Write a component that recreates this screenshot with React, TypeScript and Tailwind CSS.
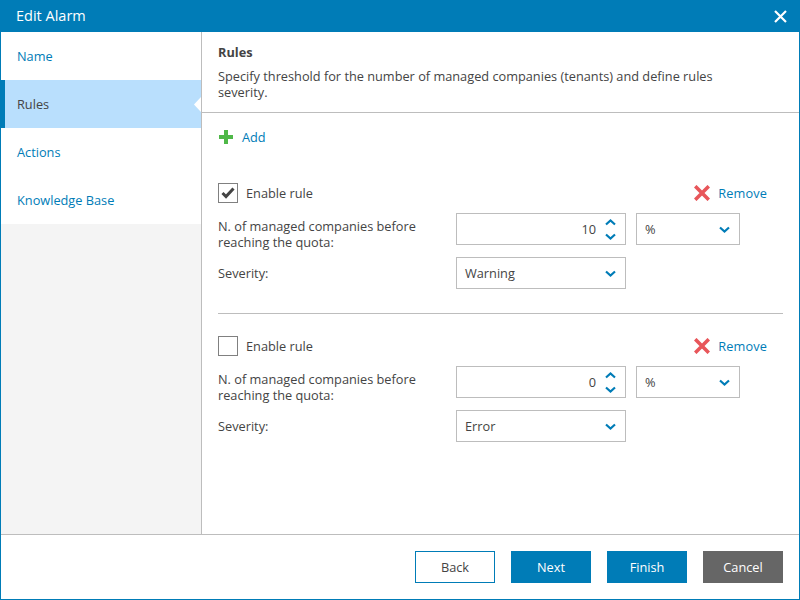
const NAV = ['Name', 'Rules', 'Actions', 'Knowledge Base']

function Chevron({ up = false }: { up?: boolean }) {
  return (
    <svg width="11" height="7" viewBox="0 0 11 7" className="block">
      <path d={up ? 'M1 5.5 L5.5 1.5 L10 5.5' : 'M1 1.5 L5.5 5.5 L10 1.5'} fill="none" stroke="#007cb7" strokeWidth="2.2" />
    </svg>
  )
}

function Select({ value, width }: { value: string; width: string }) {
  return (
    <div className={`${width} h-8 border border-[#bdbdbd] flex items-center justify-between pl-2 pr-[9px] text-[#444]`}>
      <span>{value}</span>
      <Chevron />
    </div>
  )
}

function Rule({ enabled, count, severity }: { enabled: boolean; count: string; severity: string }) {
  return (
    <div>
      <div className="flex items-center justify-between h-5 pr-[16px]">
        <div className="flex items-center gap-2">
          <div className="w-5 h-5 border border-[#808080] flex items-center justify-center">
            {enabled && (
              <svg width="14" height="12" viewBox="0 0 14 12">
                <path d="M1.5 6 L5 9.5 L12.5 1.5" fill="none" stroke="#444" strokeWidth="3" />
              </svg>
            )}
          </div>
          <span className="text-[#444]">Enable rule</span>
        </div>
        <div className="flex items-center gap-2">
          <svg width="16" height="16" viewBox="0 0 16 16" className="-ml-px">
            <path d="M1.2 1.2 L14.8 14.8 M14.8 1.2 L1.2 14.8" stroke="#e8565a" strokeWidth="3.6" />
          </svg>
          <span className="text-[#007cb7] tracking-[0.1px]">Remove</span>
        </div>
      </div>
      <div className="flex mt-[10px] h-8">
        <div className="w-[238px] shrink-0 pt-[5px]">
          <div className="w-[215px] leading-4 text-[#444]">N. of managed companies before reaching the quota:</div>
        </div>
        <div className="w-[170px] h-8 border border-[#bdbdbd] flex items-center justify-end pr-[9px] gap-[9px] text-[#444]">
          <span>{count}</span>
          <div className="flex flex-col gap-[7px]">
            <Chevron up />
            <Chevron />
          </div>
        </div>
        <div className="ml-[10px]">
          <Select value="%" width="w-[104px]" />
        </div>
      </div>
      <div className="flex items-center mt-3 h-8">
        <div className="w-[238px] text-[#444]">Severity:</div>
        <Select value={severity} width="w-[170px]" />
      </div>
    </div>
  )
}

export default function App() {
  return (
    <div className="w-[800px] h-[600px] flex flex-col bg-white text-[12.75px] leading-4 border border-t-0 border-[#007cb7] font-['Open_Sans','Noto_Sans',sans-serif]">
      <div className="h-8 -mx-px bg-[#007cb7] flex items-center justify-between pl-4 pr-[13px] text-white shrink-0">
        <span className="text-[14.5px]">Edit Alarm</span>
        <svg width="13" height="13" viewBox="0 0 13 13">
          <path d="M1 1 L12 12 M12 1 L1 12" stroke="#fff" strokeWidth="2.2" />
        </svg>
      </div>

      <div className="flex flex-1 min-h-0">
        <div className="w-[201px] shrink-0 bg-[#f4f4f4] border-r border-[#bdbdbd]">
          {NAV.map(item => (
            <div
              key={item}
              className={
                item === 'Rules'
                  ? 'relative h-12 flex items-center pl-3 border-l-4 border-[#007cb7] bg-[#b9dffd] text-[#444]'
                  : 'h-12 flex items-center pl-4 bg-white text-[#007cb7]'
              }
            >
              {item}
              {item === 'Rules' && (
                <div className="absolute right-0 top-[17px] w-[7px] h-[15px] bg-white [clip-path:polygon(100%_0,0_50%,100%_100%)]" />
              )}
            </div>
          ))}
        </div>

        <div className="flex-1 flex flex-col min-w-0">
          <div className="h-[81px] shrink-0 border-b border-[#bdbdbd] pl-4 pr-[66px] pt-3">
            <div className="font-bold text-[#444]">Rules</div>
            <div className="mt-2 text-[#444]">
              Specify threshold for the number of managed companies (tenants) and define rules severity.
            </div>
          </div>

          <div className="flex-1 pl-4 pr-4">
            <div className="flex items-center gap-[9px] h-4 mt-4">
              <svg width="14" height="14" viewBox="0 0 14 14" className="ml-px">
                <path d="M5 0 H9 V5 H14 V9 H9 V14 H5 V9 H0 V5 H5 Z" fill="#4fb848" />
              </svg>
              <span className="text-[#007cb7]">Add</span>
            </div>
            <div className="mt-[38px]">
              <Rule enabled count="10" severity="Warning" />
            </div>
            <div className="h-px bg-[#bdbdbd] mt-6 mb-[22px]" />
            <Rule enabled={false} count="0" severity="Error" />
          </div>

          <div className="h-[65px] shrink-0 -ml-[201px] border-t border-[#bdbdbd] bg-white flex items-center justify-end gap-4 pr-4">
            <button className="w-20 h-8 border border-[#007cb7] text-[#444]">Back</button>
            <button className="w-20 h-8 bg-[#007cb7] text-white">Next</button>
            <button className="w-20 h-8 bg-[#007cb7] text-white">Finish</button>
            <button className="w-20 h-8 bg-[#666] text-white">Cancel</button>
          </div>
        </div>
      </div>
    </div>
  )
}
